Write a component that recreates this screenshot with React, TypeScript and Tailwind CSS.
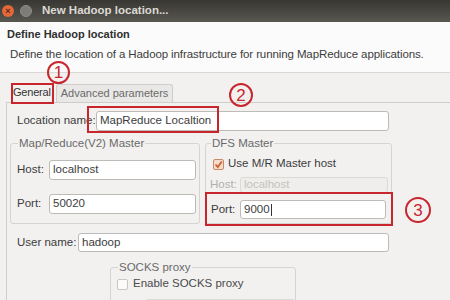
import React from 'react'

const font = { fontFamily: '"Liberation Sans", Arial, sans-serif' }

const Input = ({ value, className = '', disabled = false, caret = false }: { value: string; className?: string; disabled?: boolean; caret?: boolean }) => (
  <div
    className={`flex items-center rounded-[3px] border px-[3px] text-[11.5px] ${
      disabled ? 'border-[#dcdad6] bg-[#efeeec] text-[#c4c2be]' : 'border-[#bdbbb7] bg-white text-[#3c3c3c]'
    } ${className}`}
  >
    {value}
    {caret && <span className="ml-[1px] h-[12px] w-px bg-[#333]" />}
  </div>
)

const Checkbox = ({ checked }: { checked?: boolean }) => (
  <span
    className={`flex h-[11px] w-[11px] items-center justify-center rounded-[2px] border ${
      checked ? 'border-[#c98a67] bg-[#f4dccd]' : 'border-[#c9c7c3] bg-[#fbfbfa]'
    }`}
  >
    {checked && (
      <svg width="9" height="9" viewBox="0 0 9 9">
        <path d="M1.5 4.5 L3.8 7 L7.8 1.5" fill="none" stroke="#d0612e" strokeWidth="1.8" />
      </svg>
    )}
  </span>
)

const Mark = ({ n, className }: { n: string; className: string }) => (
  <div
    className={`absolute flex items-center justify-center rounded-full border-2 border-[#c8262d] text-[17px] leading-none text-[#c8262d] ${className}`}
  >
    {n}
  </div>
)

export default function App() {
  return (
    <div className="relative h-[300px] w-[450px] overflow-hidden bg-[#f2f1f0] text-[11.5px] text-[#3c3c3c]" style={font}>
      {/* title bar */}
      <div className="flex h-[22px] items-center bg-linear-to-b from-[#383733] to-[#58574f]">
        <span className="ml-[2px] flex h-[12px] w-[12px] items-center justify-center rounded-full bg-[#e5683a] text-[9px] font-bold leading-none text-[#5a2a16]">
          ×
        </span>
        <span className="ml-[6px] h-[12px] w-[12px] rounded-full border border-[#8d8c86] bg-[#7d7c76]" />
        <span className="ml-[10px] text-[11.5px] font-bold text-[#dcdad5]">New Hadoop location...</span>
      </div>

      {/* header */}
      <div className="h-[51px] border-b border-[#d9d7d3] bg-[#fbfbfb] pl-[7px] pt-[5px]">
        <div className="text-[11px] font-bold leading-[14px] text-[#2f2f2f]">Define Hadoop location</div>
        <div className="ml-[3px] mt-[6px] text-[11.5px] leading-[14px] tracking-[-0.1px] text-[#3c3c3c]">
          Define the location of a Hadoop infrastructure for running MapReduce applications.
        </div>
      </div>

      {/* body */}
      <div className="pl-[6px] pt-[10px]">
        <div className="ml-[6px] flex h-[19px] items-end text-[11px]">
          <div className="flex h-[19px] items-center px-[1px] tracking-[-0.2px] text-[#333]">General</div>
          <div className="ml-[4px] flex h-[18px] items-center rounded-t-[3px] border border-b-0 border-[#d0ceca] bg-[#e9e8e6] px-[4px] text-[#6b6b6b]">
            Advanced parameters
          </div>
        </div>
        <div className="h-[200px] border-l border-t border-[#cfcdc9] pl-[3px] pt-[8px]">
          <div className="flex w-[382px] flex-col">
            <div className="flex h-[20px] items-center pl-[7px] pr-[3px]">
              <span className="w-[79px] shrink-0">Location name:</span>
              <Input value="MapReduce Localtion" className="h-[20px] flex-1" />
            </div>

            <div className="mt-[5px] flex gap-[5px]">
              <fieldset className="w-[190px] rounded-[3px] border border-[#d6d4d0] pb-[8px] pl-[6px] pr-[3px]">
                <legend className="ml-[1px] px-[1px] leading-[14px] text-[#6a6a6a]">Map/Reduce(V2) Master</legend>
                <div className="mt-[10px] flex h-[20px] items-center">
                  <span className="w-[32px] shrink-0">Host:</span>
                  <Input value="localhost" className="h-[20px] flex-1" />
                </div>
                <div className="mt-[14px] flex h-[20px] items-center">
                  <span className="w-[32px] shrink-0">Port:</span>
                  <Input value="50020" className="h-[20px] flex-1" />
                </div>
              </fieldset>
              <fieldset className="w-[187px] rounded-[3px] border border-[#d6d4d0] pb-[4px] pl-[4px] pr-[3px]">
                <legend className="ml-[1px] px-[1px] leading-[14px] text-[#6a6a6a]">DFS Master</legend>
                <div className="mt-[7px] flex h-[14px] items-center pl-[3px]">
                  <Checkbox checked />
                  <span className="ml-[4px]">Use M/R Master host</span>
                </div>
                <div className="mt-[5px] flex h-[17px] items-center">
                  <span className="w-[30px] shrink-0 text-[#b1afab]">Host:</span>
                  <Input value="localhost" disabled className="h-[16px] flex-1" />
                </div>
                <div className="mt-[7px] flex h-[19px] items-center pl-[1px]">
                  <span className="w-[29px] shrink-0">Port:</span>
                  <Input value="9000" caret className="mr-[2px] h-[19px] flex-1" />
                </div>
              </fieldset>
            </div>

            <div className="mt-[9px] flex h-[19px] items-center pl-[7px] pr-[3px]">
              <span className="w-[61px] shrink-0">User name:</span>
              <Input value="hadoop" className="h-[19px] flex-1" />
            </div>

            <fieldset className="ml-[100px] mt-[8px] w-[186px] rounded-[3px] border border-[#d6d4d0] pl-[6px]">
              <legend className="ml-[1px] px-[1px] leading-[14px] text-[#6a6a6a]">SOCKS proxy</legend>
              <div className="mt-[3px] flex h-[14px] items-center">
                <Checkbox />
                <span className="ml-[5px] text-[#4a4a4a]">Enable SOCKS proxy</span>
              </div>
              <div className="ml-[28px] mt-[8px] h-[20px] rounded-[3px] border border-[#dcdad6] bg-[#efeeec]" />
            </fieldset>
          </div>
        </div>
      </div>

      {/* annotations */}
      <div className="absolute left-[11px] top-[83px] h-[21px] w-[43px] border-2 border-[#c8262d]" />
      <div className="absolute left-[87px] top-[106px] h-[27px] w-[132px] border-2 border-[#c8262d]" />
      <div className="absolute left-[205px] top-[192px] h-[34px] w-[188px] border-2 border-[#c8262d]" />
      <Mark n="1" className="left-[47px] top-[61px] h-[23px] w-[23px]" />
      <Mark n="2" className="left-[229px] top-[83px] h-[24px] w-[24px]" />
      <Mark n="3" className="left-[405px] top-[197px] h-[26px] w-[26px]" />
    </div>
  )
}
